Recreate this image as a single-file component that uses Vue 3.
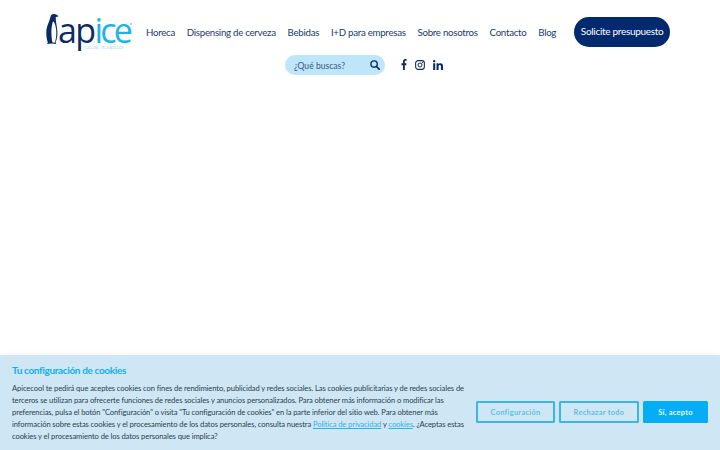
<script setup>
const links = ['Horeca', 'Dispensing de cerveza', 'Bebidas', 'I+D para empresas', 'Sobre nosotros', 'Contacto', 'Blog']
</script>

<template>
  <div class="page">
    <header class="header">
      <a class="logo">
        <svg class="penguin" width="13" height="30" viewBox="0 0 13 30">
          <path fill="#0b2c63" d="M8 0 C6 0 4.6 1.2 4.3 3.2 C3.6 7.5 0.4 12 0.3 18 C0.2 22 0.8 26 1.8 28.5 L1 30 L6 29.6 L10 30 L9.6 28.6 C11.4 24 12 19 11 14 C10.4 10 9.6 6.5 9.8 3 L12.6 2.6 C11.6 1 10 0 8 0 Z"/>
          <path fill="#ffffff" d="M6.8 8 C5 13 5 22 6.5 28.4 L9 28.4 C10.6 23 10.8 17 9.6 12.5 C9 9.5 7.6 6 6.8 8 Z"/>
        </svg>
        <span class="wordmark"><span class="ap">ap</span><span class="ice">ice</span><i class="reg"></i><small class="tag">COOLING TECHNOLOGY</small></span>
      </a>
      <nav class="nav">
        <a v-for="l in links" :key="l" class="link">{{ l }}</a>
      </nav>
      <a class="cta">Solicite presupuesto</a>
      <div class="break"></div>
      <div class="tools">
        <div class="search">
          <span class="placeholder">¿Qué buscas?</span>
          <svg width="10" height="10" viewBox="0 0 11 11"><circle cx="4.5" cy="4.5" r="3.5" fill="none" stroke="#0b2c63" stroke-width="1.5"/><path d="M7 7 L10.3 10.3" stroke="#0b2c63" stroke-width="1.7" stroke-linecap="round"/></svg>
        </div>
        <div class="social">
          <svg class="fb" width="6" height="11" viewBox="0 0 320 512" preserveAspectRatio="none"><path fill="#0b2c63" d="M279 288l14-93h-89v-60c0-25 12-50 52-50h41V6s-37-6-72-6C152 0 105 44 105 124v71H24v93h81v224h99V288z"/></svg>
          <svg width="10" height="10" viewBox="0 0 11 11"><rect x=".7" y=".7" width="9.6" height="9.6" rx="2.8" fill="none" stroke="#0b2c63" stroke-width="1.2"/><circle cx="5.5" cy="5.5" r="2.2" fill="none" stroke="#0b2c63" stroke-width="1.1"/><circle cx="8.2" cy="2.8" r=".7" fill="#0b2c63"/></svg>
          <svg width="10" height="10" viewBox="0 0 448 448"><path fill="#0b2c63" d="M100 448H7V149h93zM53 108C24 108 0 84 0 54a54 54 0 0 1 108 0c0 30-24 54-55 54zM448 448h-93V302c0-35-1-79-48-79-48 0-56 38-56 77v148h-93V149h89v41h1c12-24 43-48 88-48 94 0 112 62 112 142z"/></svg>
        </div>
      </div>
    </header>

    <section class="cookies">
      <div class="copy">
        <h2 class="title">Tu configuración de cookies</h2>
        <p class="text">Apicecool te pedirá que aceptes cookies con fines de rendimiento, publicidad y redes sociales. Las cookies publicitarias y de redes sociales de<br>terceros se utilizan para ofrecerte funciones de redes sociales y anuncios personalizados. Para obtener más información o modificar las<br>preferencias, pulsa el botón "Configuración" o visita "Tu configuración de cookies" en la parte inferior del sitio web. Para obtener más<br>información sobre estas cookies y el procesamiento de los datos personales, consulta nuestra <a>Política de privacidad</a> y <a>cookies</a>. ¿Aceptas estas<br>cookies y el procesamiento de los datos personales que implica?</p>
      </div>
      <div class="actions">
        <button class="btn ghost cfg">Configuración</button>
        <button class="btn ghost rej">Rechazar todo</button>
        <button class="btn solid">Sí, acepto</button>
      </div>
    </section>
  </div>
</template>

<style>
html, body { margin: 0; background: #fff; overflow: hidden; }
</style>

<style scoped>
.page {
  width: 720px; height: 450px; display: flex; flex-direction: column; justify-content: space-between;
  font-family: "Lato", "Open Sans", sans-serif; color: #0b2c63; overflow: hidden;
}
.header { display: flex; flex-wrap: wrap; align-items: center; padding: 14px 0 0 46px; width: 690px; box-sizing: border-box; }
.logo { display: flex; align-items: flex-start; width: 100px; height: 36px; }
.penguin { flex: none; }
.wordmark { position: relative; display: block; margin: -3px 0 0 -1px; font-family: "Open Sans", sans-serif; font-size: 34px; line-height: 38px; letter-spacing: -1.6px; white-space: nowrap; }
.ap { color: #0b2c63; font-weight: 400; }
.ice { color: #1bb4ea; font-weight: 400; letter-spacing: -2.8px; }
.reg { position: absolute; left: 72px; top: 12px; width: 2px; height: 2px; border-radius: 50%; background: #7fd3f2; }
.tag { position: absolute; left: 26px; top: 36px; font-size: 3.2px; line-height: 3px; letter-spacing: .2px; color: #7fd3f2; }
.nav { display: flex; gap: 11.8px; }
.link { font-size: 9.7px; letter-spacing: -.27px; line-height: 13px; color: #1a3a70; white-space: nowrap; }
.cta { margin-left: 18px; height: 30px; width: 96px; border-radius: 15px; background: #03296f; color: #fff; font-size: 10px; letter-spacing: -.3px; line-height: 29px; text-align: center; white-space: nowrap; }
.break { flex-basis: 100%; height: 0; }
.tools { margin: 5px 0 0 239px; display: flex; align-items: center; gap: 16px; }
.search { width: 100px; height: 20px; box-sizing: border-box; padding: 0 5px 0 9px; border-radius: 10px; background: #bde6fb; display: flex; align-items: center; justify-content: space-between; font-size: 8.6px; color: #3a5680; }
.placeholder { padding-top: 2px; }
.social { display: flex; align-items: center; gap: 8px; margin-top: -1px; }
.cookies { height: 95px; box-sizing: border-box; background: #cfe7f4; padding: 8px 12px 0; display: flex; justify-content: space-between; box-shadow: 0 0 6px rgba(0,0,0,.06); }
.copy { width: 454px; flex: none; }
.title { margin: 0 0 6px; font-size: 10px; letter-spacing: -.35px; line-height: 14px; font-weight: 700; color: #14aeea; }
.text { margin: 0; font-size: 7.6px; letter-spacing: -.1px; line-height: 11.95px; color: #2c3e4e; white-space: nowrap; }
.text a { color: #2bb2e8; text-decoration: underline; }
.actions { display: flex; gap: 4px; margin-top: 38px; height: 22px; }
.btn { box-sizing: border-box; height: 22px; border-radius: 1.5px; font-family: inherit; font-size: 7.4px; letter-spacing: .3px; padding: 0; font-weight: 700; }
.ghost { background: transparent; border: 2px solid #3ab6e8; color: #5bbfe6; }
.cfg { width: 79px; }
.rej { width: 80px; }
.solid { width: 65px; background: #04adf6; border: none; color: #e9f7fd; }
</style>
